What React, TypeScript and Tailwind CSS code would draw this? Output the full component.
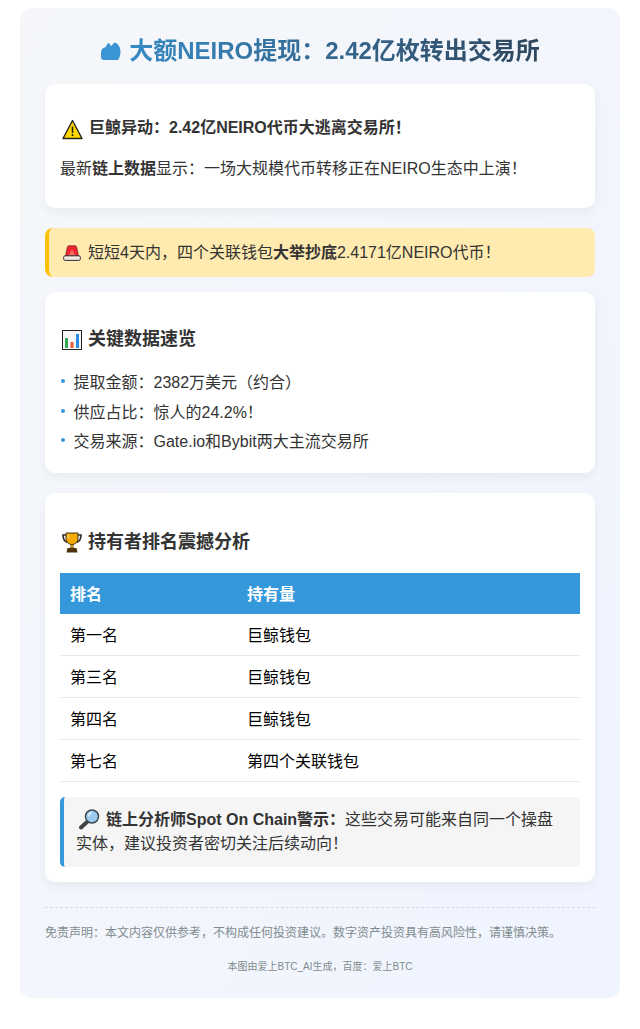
const font = "font-['Liberation_Sans','Noto_Sans_CJK_SC',sans-serif]";

function Bicep() {
  return (
    <svg width="22" height="22" viewBox="0 0 22 22" className="shrink-0">
      <path d="M1 13c0-3 1.500-5 3.500-5.500 1-.3 1.700-1 2.200-2.200.6-1.500 1.300-2 2.300-2 .8 0 1 .8 1.200 1.700.3 1 1.200 1 1.800.2 1-1.300 2-2.700 3.500-2.700 2.500 1.500 5 4.500 5 9 0 3.500-1 6.500-2.500 8.500H4c-2 0-3-1-3-3z" fill="#3b94d3" />
    </svg>
  );
}

function Warning() {
  return (
    <svg width="21" height="21" viewBox="0 0 21 21" className="ml-0.5 shrink-0 translate-y-[1px]">
      <path d="M10.500 1.500 20 19.500H1z" fill="#ffd800" stroke="#222" strokeWidth="1.400" strokeLinejoin="round" />
      <rect x="9.700" y="7.500" width="1.600" height="6.500" fill="#222" />
      <rect x="9.700" y="15" width="1.600" height="2" fill="#222" />
    </svg>
  );
}

function Siren() {
  return (
    <svg width="18" height="16" viewBox="0 0 18 16" className="shrink-0">
      <path d="M2.500 11 4.200 2.500C4.400 1.300 5 .7 6 .7h6c1 0 1.600.6 1.800 1.800L15.500 11z" fill="#ee2430" stroke="#6a2a2a" strokeWidth="0.700" />
      <path d="M9 4 12.500 10.500H5.500z" fill="#f9685f" />
      <rect x="0.600" y="10.800" width="16.800" height="4.600" rx="1.600" fill="#efe6df" stroke="#333" strokeWidth="1" />
    </svg>
  );
}

function Chart() {
  return (
    <svg width="20" height="20" viewBox="0 0 20 20" className="ml-0.5 shrink-0 translate-y-[1px]">
      <rect x="0.500" y="0.500" width="19" height="19" fill="#f6f6f6" stroke="#222" />
      <rect x="3" y="8" width="3" height="10" fill="#2fa84f" />
      <rect x="8.500" y="12" width="3" height="6" fill="#ef5b3a" />
      <rect x="14" y="4" width="3" height="14" fill="#2b8be0" />
    </svg>
  );
}

function Trophy() {
  return (
    <svg width="20" height="21" viewBox="0 0 20 21" className="ml-0.5 shrink-0">
      <path d="M5 3H1c0 4 1.500 7 5.500 7.500M15 3h4c0 4-1.500 7-5.500 7.500" fill="none" stroke="#3a3020" strokeWidth="1.700" />
      <path d="M4 1h12v5.500c0 3.500-2.800 6-6 6s-6-2.500-6-6z" fill="#f5a800" stroke="#3a3020" />
      <path d="M6.500 2.500v4" stroke="#ffd76a" strokeWidth="1.500" />
      <rect x="8.800" y="12.500" width="2.400" height="3.500" fill="#e09000" stroke="#3a3020" strokeWidth="0.400" />
      <path d="M5.500 16h9l1 4.500h-11z" fill="#4a3410" />
    </svg>
  );
}

function Magnifier() {
  return (
    <span className="mr-[6px] inline-block align-[-5px]">
      <svg width="22" height="21" viewBox="0 0 22 21" className="block">
        <path d="M9 13 3 18.500" stroke="#444" strokeWidth="4" strokeLinecap="round" />
        <circle cx="14" cy="7.500" r="6.500" fill="#9ccbef" stroke="#3d4a52" strokeWidth="1.500" />
        <path d="M10.300 7.500c0-2 1.500-3.700 3.700-3.700" stroke="#e4f3ff" strokeWidth="1.500" fill="none" />
      </svg>
    </span>
  );
}

const stats = [
  '提取金额：2382万美元（约合）',
  '供应占比：惊人的24.2%！',
  '交易来源：Gate.io和Bybit两大主流交易所',
];

const holders = [
  ['第一名', '巨鲸钱包'],
  ['第三名', '巨鲸钱包'],
  ['第四名', '巨鲸钱包'],
  ['第七名', '第四个关联钱包'],
];

function Card({ className, children }: { className: string; children: React.ReactNode }) {
  return (
    <section className={`rounded-[10px] bg-white px-[15px] shadow-[0_4px_12px_rgba(0,0,0,0.05)] ${className}`}>
      {children}
    </section>
  );
}

export default function App() {
  return (
    <div className={`${font} bg-white px-5 pt-2 pb-[31px] text-[#333]`}>
      <main className="flex h-[990px] flex-col rounded-xl bg-gradient-to-br from-[#f5f7fa] to-[#f0f4ff] px-[25px] pt-[25px]">
        <h1 className="flex h-9 items-center justify-center gap-[7px] bg-gradient-to-r from-[#3498db] to-[#2c3e50] bg-clip-text text-2xl font-bold text-transparent">
          <Bicep />
          <span>大额NEIRO提现：2.42亿枚转出交易所</span>
        </h1>

        <Card className="mt-[15px] h-[124px] pt-[32px]">
          <h3 className="flex h-6 items-center gap-1.5 text-base font-bold">
            <Warning />
            <span>巨鲸异动：2.42亿NEIRO代币大逃离交易所！</span>
          </h3>
          <p className="mt-[17px] text-base leading-[24px]">
            最新<strong>链上数据</strong>显示：一场大规模代币转移正在NEIRO生态中上演！
          </p>
        </Card>

        <div className="mt-5 flex h-[49px] items-center gap-[7px] rounded-lg border-l-4 border-[#ffc107] bg-[#ffeab0] pl-[14px] text-base">
          <Siren />
          <span>
            短短4天内，四个关联钱包<strong>大举抄底</strong>2.4171亿NEIRO代币！
          </span>
        </div>

        <Card className="mt-[15px] h-[181px] pt-[33px]">
          <h2 className="flex h-7 items-center gap-1.5 text-lg font-bold">
            <Chart />
            <span>关键数据速览</span>
          </h2>
          <ul className="mt-[18px] flex flex-col gap-[5.500px]">
            {stats.map((item) => (
              <li key={item} className="flex h-6 items-center text-base">
                <span className="mr-[8.500px] ml-px size-1 -translate-y-0.5 rounded-full bg-[#3498db]" />
                {item}
              </li>
            ))}
          </ul>
        </Card>

        <Card className="mt-5 h-[389px] pt-[34px]">
          <h2 className="flex h-7 translate-y-px items-center gap-1.5 text-lg font-bold">
            <Trophy />
            <span>持有者排名震撼分析</span>
          </h2>
          <table className="mt-[18px] w-full border-separate border-spacing-0 text-base text-black">
            <thead>
              <tr className="h-[41px] bg-[#3498db] text-left text-white">
                <th className="w-[177px] pt-0.5 pl-2.5 font-bold">排名</th>
                <th className="pt-0.5 pl-2.5 font-bold">持有量</th>
              </tr>
            </thead>
            <tbody>
              {holders.map(([rank, amount]) => (
                <tr key={rank} className="h-[42px]">
                  <td className="border-b border-[#e8e8e8] pt-[3px] pl-2.5">{rank}</td>
                  <td className="border-b border-[#e8e8e8] pt-[3px] pl-2.5">{amount}</td>
                </tr>
              ))}
            </tbody>
          </table>
          <div className="mt-[15px] rounded-[5px] border-l-4 border-[#3498db] bg-[#f5f5f5] py-[11px] pr-[20px] pl-3 text-base leading-[24px]">
            <span className="ml-0.5">
              <Magnifier />
            </span>
            <strong>链上分析师Spot On Chain警示：</strong>这些交易可能来自同一个操盘实体，建议投资者密切关注后续动向！
          </div>
        </Card>

        <footer className="mt-[25px] border-t border-dashed border-[#d5dce5] pt-4">
          <p className="text-xs leading-[18px] text-[#7f8c8d]">
            免责声明：本文内容仅供参考，不构成任何投资建议。数字资产投资具有高风险性，请谨慎决策。
          </p>
          <p className="mt-[17px] text-center text-[10px] leading-[15px] text-[#7f8c8d]">
            本图由爱上BTC_AI生成，百度：爱上BTC
          </p>
        </footer>
      </main>
    </div>
  );
}
